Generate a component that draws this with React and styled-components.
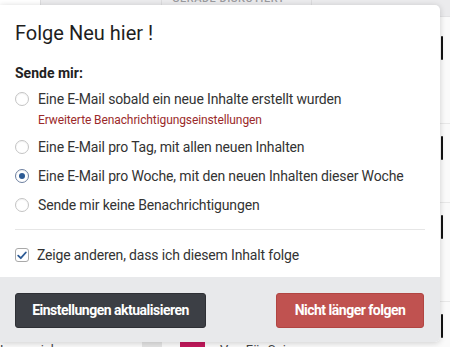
import React from 'react';
import styled, { createGlobalStyle } from 'styled-components';

const GlobalStyle = createGlobalStyle`
  html, body {
    margin: 0;
    padding: 0;
    background: #fafafa;
  }
  body {
    font-family: Roboto, 'Liberation Sans', sans-serif;
    color: #222;
  }
`;

const Page = styled.div`
  position: relative;
  width: 450px;
  height: 347px;
  overflow: hidden;
  background: #fafafa;
`;

const TabBar = styled.div`
  display: flex;
  height: 29px;
  margin-top: -13px;
  background: #ebebed;
  border-bottom: 1px solid #e2e2e4;
`;

const Tab = styled.div`
  width: ${p => p.width}px;
  background: ${p => (p.active ? '#fff' : 'transparent')};
  border-right: 1px solid #dcdcde;
  border-bottom-right-radius: ${p => (p.active ? '8px' : '0')};
  font-size: 11px;
  font-weight: 500;
  letter-spacing: 0.5px;
  color: #9a9a9e;
  text-transform: uppercase;
  line-height: 24px;
  padding-left: ${p => p.pad || 0}px;
  box-sizing: border-box;
  white-space: nowrap;
`;

const Feed = styled.div`
  display: flex;
  flex-direction: column;
`;

const FeedRow = styled.div`
  height: ${p => p.h}px;
  box-sizing: border-box;
  display: flex;
  align-items: flex-start;
  padding-top: ${p => p.top}px;
  border-bottom: 1px solid #e8e8e8;
  padding-right: 7px;
`;

const FeedItem = styled.div`
  flex: 1;
  display: flex;
  align-items: flex-start;
  padding-top: 28px;
  font-size: 13px;
  color: #444;
`;

const FeedName = styled.span`
  width: 142px;
  white-space: nowrap;
`;

const Thumb = styled.div`
  width: ${p => p.w}px;
  height: 18px;
  background: ${p => p.color};
  margin-left: ${p => p.ml || 0}px;
`;

const FeedMeta = styled.span`
  margin-left: 15px;
  white-space: nowrap;
`;

const Bar = styled.div`
  margin-left: auto;
  width: 2px;
  height: 24px;
  background: #111;
  border-radius: 1px;
`;

const Popover = styled.div`
  position: absolute;
  left: 0;
  top: 5px;
  width: 440px;
  height: 337px;
  background: #fff;
  border-radius: 0 5px 5px 0;
  box-shadow: 0 1px 6px rgba(0, 0, 0, 0.18);
  display: flex;
  flex-direction: column;
  overflow: hidden;
`;

const Body = styled.div`
  flex: 1;
  padding: 15px 15px 0 15px;
`;

const Title = styled.h2`
  margin: 0;
  font-size: 20px;
  font-weight: 400;
  line-height: 26px;
  color: #1e1e1e;
`;

const Label = styled.div`
  margin-top: 17px;
  font-size: 14px;
  font-weight: 700;
  color: #222;
  line-height: 20px;
`;

const Options = styled.div`
  margin-top: 2px;
  display: flex;
  flex-direction: column;
`;

const Option = styled.label`
  display: flex;
  align-items: flex-start;
  gap: 9px;
  padding: 5px 0;
  font-size: 14px;
  line-height: 19px;
  letter-spacing: -0.15px;
  color: #333;
`;

const Radio = styled.span`
  flex: none;
  width: 14px;
  height: 14px;
  margin-top: 2px;
  box-sizing: border-box;
  border-radius: 50%;
  border: 1px solid ${p => (p.checked ? '#6d7f9f' : '#c4c4c4')};
  background: #fff;
  display: flex;
  align-items: center;
  justify-content: center;
  box-shadow: inset 0 1px 1px rgba(0, 0, 0, 0.05);

  &::after {
    content: '';
    display: ${p => (p.checked ? 'block' : 'none')};
    width: 6px;
    height: 6px;
    border-radius: 50%;
    background: #2c5a94;
  }
`;

const OptionText = styled.div`
  display: flex;
  flex-direction: column;
`;

const SettingsLink = styled.a`
  margin: 2px 0 -2px 0;
  font-size: 12px;
  line-height: 19px;
  letter-spacing: -0.1px;
  color: #9b2a2a;
  text-decoration: none;
`;

const Divider = styled.hr`
  margin: 9px 0 0 0;
  border: none;
  border-top: 1px solid #e6e6e6;
`;

const CheckRow = styled.label`
  display: flex;
  align-items: center;
  gap: 8px;
  margin-top: 17px;
  font-size: 14px;
  letter-spacing: -0.16px;
  color: #333;
`;

const CheckBox = styled.span`
  flex: none;
  width: 14px;
  height: 14px;
  box-sizing: border-box;
  border: 1px solid #a9a9a9;
  border-radius: 3px;
  background: #fff;
  display: flex;
  align-items: center;
  justify-content: center;
`;

const Footer = styled.div`
  height: 65px;
  flex: none;
  background: #e8e9eb;
  display: flex;
  align-items: center;
  justify-content: space-between;
  padding: 0 16px 0 15px;
`;

const Button = styled.button`
  height: 35px;
  width: ${p => p.width}px;
  border: 1px solid ${p => (p.danger ? '#b14542' : '#2e3035')};
  border-radius: 3px;
  background: ${p => (p.danger ? '#c05250' : '#3c3f45')};
  color: #fff;
  font-family: Roboto, 'Liberation Sans', sans-serif;
  font-size: 14px;
  font-weight: 700;
  letter-spacing: -0.5px;
  margin-top: 1px;
`;

const options = [
  { text: 'Eine E-Mail sobald ein neue Inhalte erstellt wurden', link: true },
  { text: 'Eine E-Mail pro Tag, mit allen neuen Inhalten' },
  { text: 'Eine E-Mail pro Woche, mit den neuen Inhalten dieser Woche', checked: true },
  { text: 'Sende mir keine Benachrichtigungen' },
];

const App = () => (
  <Page>
    <GlobalStyle />
    <TabBar>
      <Tab width={41} active />
      <Tab width={121} />
      <Tab width={150} pad={10}>Gerade diskutiert</Tab>
    </TabBar>
    <Feed>
      <FeedRow h={107} top={19}><Bar /></FeedRow>
      <FeedRow h={79} top={12}><Bar /></FeedRow>
      <FeedRow h={99} top={12}><Bar /></FeedRow>
      <FeedRow h={60} top={12}>
        <FeedItem>
          <FeedName>Lesezeichen</FeedName>
          <Thumb w={20} color="#e4e4e4" />
          <Thumb w={25} color="#c2185b" ml={18} />
          <FeedMeta>Von Für Spinne</FeedMeta>
        </FeedItem>
        <Bar />
      </FeedRow>
    </Feed>

    <Popover>
      <Body>
        <Title>Folge Neu hier !</Title>
        <Label>Sende mir:</Label>
        <Options>
          {options.map(o => (
            <Option key={o.text}>
              <Radio checked={o.checked} />
              <OptionText>
                <span>{o.text}</span>
                {o.link && <SettingsLink>Erweiterte Benachrichtigungseinstellungen</SettingsLink>}
              </OptionText>
            </Option>
          ))}
        </Options>
        <Divider />
        <CheckRow>
          <CheckBox>
            <svg width="10" height="9" viewBox="0 0 10 9">
              <path d="M1.2 4.6 L3.8 7.2 L8.8 1.5" fill="none" stroke="#2d5b95" strokeWidth="1.8" strokeLinecap="round" strokeLinejoin="round" />
            </svg>
          </CheckBox>
          Zeige anderen, dass ich diesem Inhalt folge
        </CheckRow>
      </Body>
      <Footer>
        <Button width={191}>Einstellungen aktualisieren</Button>
        <Button danger width={148}>Nicht länger folgen</Button>
      </Footer>
    </Popover>
  </Page>
);

export default App;
